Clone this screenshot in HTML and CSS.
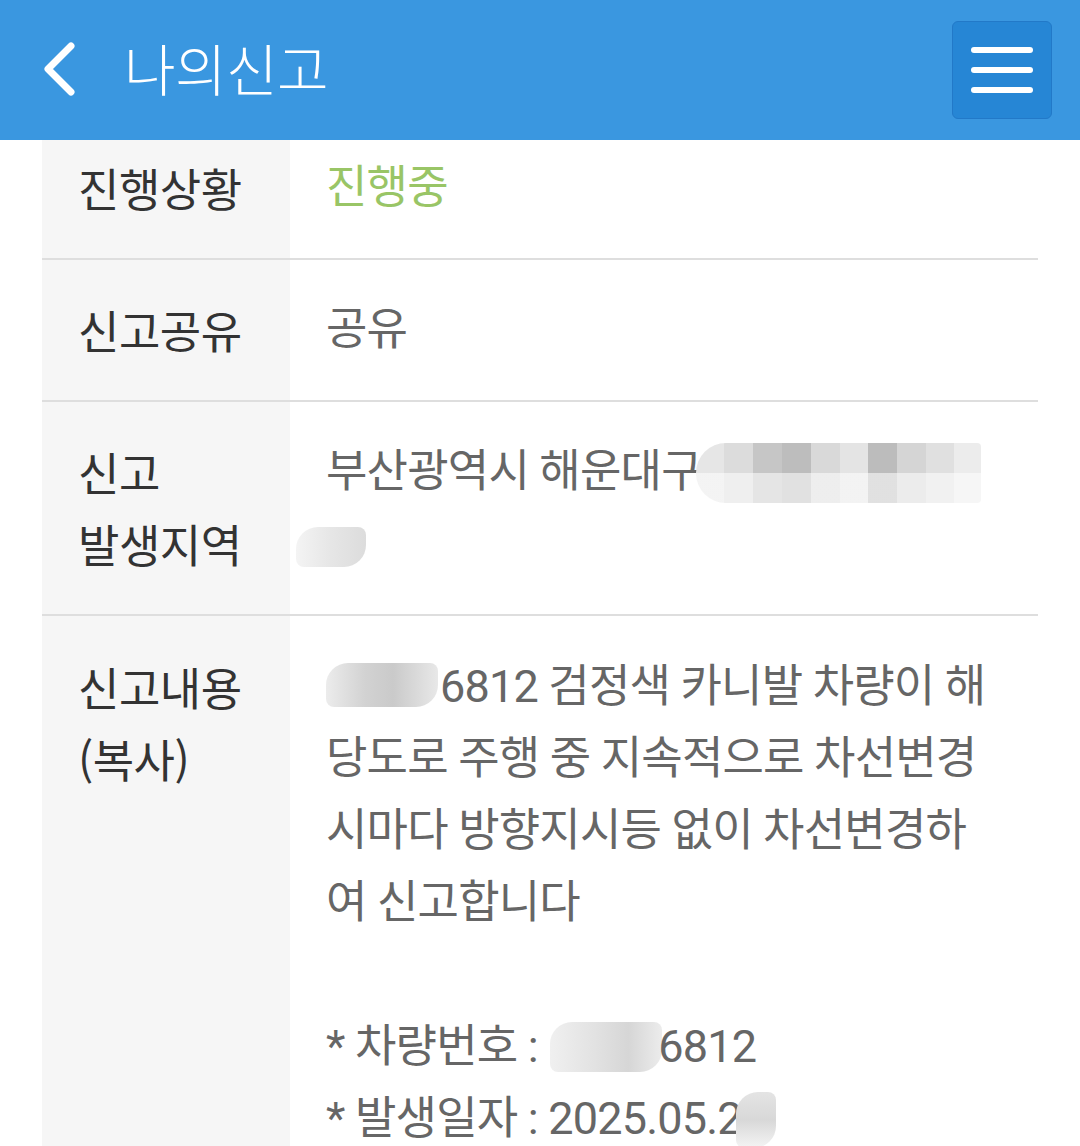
FILE: index.html
```html
<!DOCTYPE html>
<html lang="ko">
<head>
<meta charset="utf-8">
<title>나의신고</title>
<link rel="stylesheet" href="styles.css">
</head>
<body>
<header class="topbar">
  <div class="topbar-left">
    <svg class="back" width="40" height="60" viewBox="0 0 40 60">
      <polyline points="31,7 8,30 31,53" fill="none" stroke="#fff" stroke-width="7" stroke-linecap="round" stroke-linejoin="round"/>
    </svg>
    <h1 class="title">나의신고</h1>
  </div>
  <button class="menu-btn" aria-label="메뉴">
    <span class="bar"></span><span class="bar"></span><span class="bar"></span>
  </button>
</header>
<main class="detail">
  <div class="row row-first">
    <div class="label">진행상황</div>
    <div class="value status">진행중</div>
  </div>
  <div class="row">
    <div class="label">신고공유</div>
    <div class="value">공유</div>
  </div>
  <div class="row">
    <div class="label">신고<br>발생지역</div>
    <div class="value">
      <span class="line">부산광역시 해운대구<span class="mosaic mosaic-addr"></span></span>
      <span class="line"><span class="smudge smudge-addr2"></span></span>
    </div>
  </div>
  <div class="row row-last">
    <div class="label">신고내용<br>(복사)</div>
    <div class="value">
      <span class="line"><span class="smudge smudge-plate"></span>6812 검정색 카니발 차량이 해</span>
      <span class="line">당도로 주행 중 지속적으로 차선변경</span>
      <span class="line">시마다 방향지시등 없이 차선변경하</span>
      <span class="line">여 신고합니다</span>
      <span class="line">&nbsp;</span>
      <span class="line">* 차량번호 : <span class="smudge smudge-plate2"></span>6812</span>
      <span class="line">* 발생일자 : 2025.05.2<span class="smudge smudge-date"></span></span>
    </div>
  </div>
</main>
</body>
</html>
```
FILE: styles.css
```css
html, body {
  margin: 0;
  padding: 0;
  background: #ffffff;
}
body {
  font-family: Roboto, "Noto Sans CJK KR", sans-serif;
  width: 1080px;
  height: 1146px;
  overflow: hidden;
}
.topbar {
  height: 140px;
  background: #3a97e0;
  display: flex;
  align-items: center;
  justify-content: space-between;
  padding: 0 28px 2px 40px;
  box-sizing: border-box;
}
.topbar-left {
  display: flex;
  align-items: center;
}
.back {
  display: block;
}
.title {
  margin: 0 0 4px 44px;
  color: #ffffff;
  font-family: "Noto Sans CJK KR", sans-serif;
  font-weight: 300;
  font-size: 56px;
  letter-spacing: -0.5px;
  line-height: 1;
}
.menu-btn {
  width: 100px;
  height: 98px;
  margin-top: 2px;
  background: #2686d5;
  border: 1px solid #2279c8;
  border-radius: 6px;
  display: flex;
  flex-direction: column;
  align-items: center;
  justify-content: center;
  gap: 14px;
  padding: 0;
}
.bar {
  display: block;
  width: 62px;
  height: 6px;
  border-radius: 3px;
  background: #ffffff;
}
.detail {
  margin: 0 42px;
}
.row {
  display: grid;
  grid-template-columns: 248px 1fr;
  border-bottom: 2px solid #dedede;
}
.row-last {
  border-bottom: none;
}
.label {
  background: #f6f6f6;
  color: #333333;
  font-family: "Noto Sans CJK KR", sans-serif;
  font-size: 45px;
  line-height: 72px;
  padding: 34px 0 34px 36px;
  letter-spacing: -0.5px;
}
.value {
  color: #666666;
  font-size: 45px;
  line-height: 72px;
  padding: 34px 0 34px 36px;
  letter-spacing: -0.8px;
  white-space: nowrap;
}
.row-first .label,
.row-first .value {
  padding-top: 12px;
}
.row-last .label,
.row-last .value {
  padding-top: 35px;
  padding-bottom: 60px;
}
.status {
  color: #99c566;
}
.line {
  display: block;
  height: 72px;
}
.mosaic {
  display: inline-block;
  vertical-align: middle;
  width: 285px;
  height: 60px;
  margin-left: -6px;
  margin-top: -4px;
  border-radius: 30px 4px 4px 30px;
  background:
    linear-gradient(to bottom, rgba(255,255,255,0) 50%, rgba(255,255,255,0.55) 50%),
    linear-gradient(to right,
      #e6e6e6 0 28px, #dcdcdc 28px 57px, #c6c6c6 57px 86px, #bdbdbd 86px 115px,
      #d9d9d9 115px 144px, #e4e4e4 144px 172px, #bcbcbc 172px 201px, #d5d5d5 201px 230px,
      #e0e0e0 230px 258px, #ececec 258px 285px);
}
.smudge {
  display: inline-block;
  vertical-align: middle;
  background: linear-gradient(to right, #ececec, #d2d2d2 35%, #cacaca 60%, #e8e8e8);
  border-radius: 22px 8px 22px 8px;
}
.smudge-addr2 {
  width: 70px;
  height: 40px;
  margin-left: -30px;
  background: linear-gradient(to right, #f4f4f4, #e6e6e6 50%, #dcdcdc);
}
.smudge-plate {
  width: 112px;
  height: 44px;
  margin-top: -10px;
  margin-right: 2px;
}
.smudge-plate2 {
  width: 112px;
  height: 50px;
  margin-left: 2px;
  margin-right: -4px;
  margin-top: -6px;
  background: linear-gradient(to right, #f0f0f0, #e2e2e2 40%, #d6d6d6 70%, #ececec);
}
.smudge-date {
  width: 40px;
  height: 56px;
  margin-left: -6px;
  margin-top: -4px;
  background: linear-gradient(to bottom, #e4e4e4, #d8d8d8 50%, #f4f4f4);
}
```
